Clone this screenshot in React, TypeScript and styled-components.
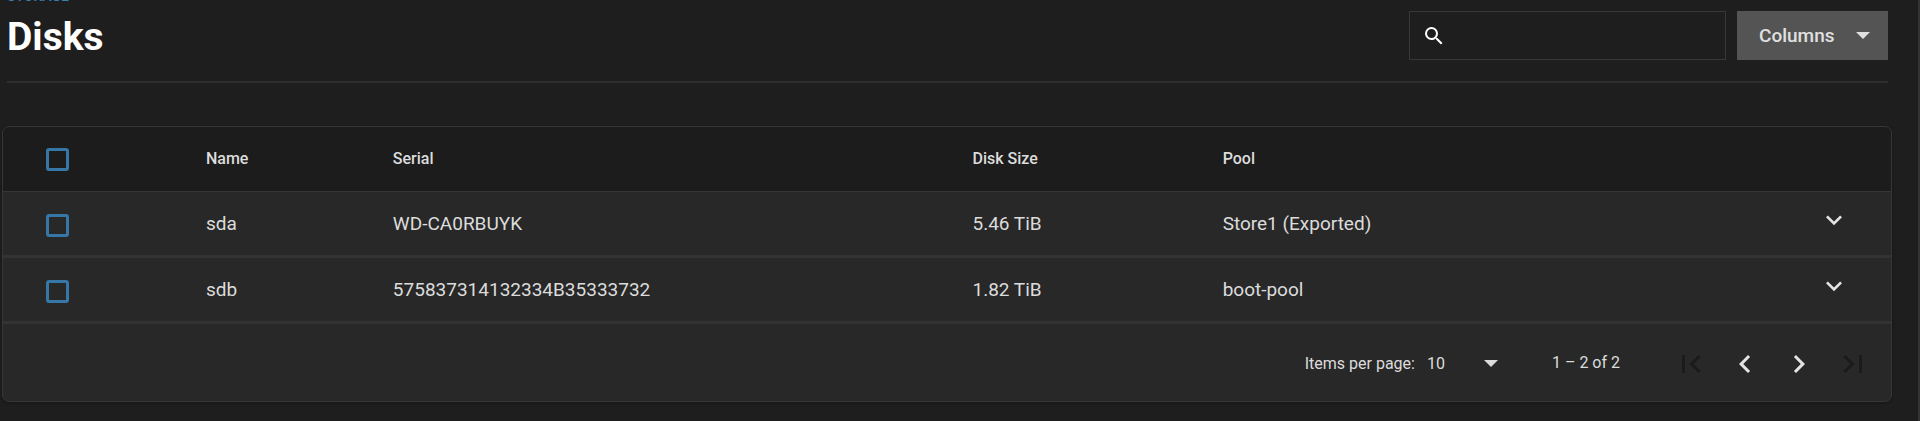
import React, { useState } from 'react';
import styled, { createGlobalStyle } from 'styled-components';

const GlobalStyle = createGlobalStyle`
  *, *::before, *::after { box-sizing: border-box; }
  html { background: #1e1e1e; overflow: hidden; }
  body {
    margin: 0;
    background: #1e1e1e;
    color: #dcdcdc;
    font-family: Roboto, "Liberation Sans", sans-serif;
    font-size: 19px;
  }
  button, input, select { font: inherit; color: inherit; }
`;

const Page = styled.main`
  min-height: 100vh;
  padding: 0 26px 16px 2px;
  border-right: 2px solid #333333;
`;

const PageHeader = styled.header`
  display: flex;
  justify-content: space-between;
  align-items: flex-start;
  margin: 0 4px 0 5px;
  height: 83px;
  border-bottom: 2px solid #2e2e2e;
`;

const Heading = styled.div`
  display: flex;
  flex-direction: column;
  margin-top: -12px;
`;

const Breadcrumb = styled.a`
  color: #3a80b0;
  font-size: 14px;
  line-height: 16px;
  font-weight: 500;
  text-decoration: none;
  text-transform: uppercase;
`;

const Title = styled.h1`
  margin: 10px 0 0;
  color: #ffffff;
  font-size: 39px;
  line-height: 46px;
  font-weight: 700;
`;

const Toolbar = styled.div`
  display: flex;
  gap: 11px;
  padding-top: 11px;
`;

const SearchBox = styled.label`
  display: flex;
  align-items: center;
  gap: 8px;
  width: 317px;
  height: 49px;
  padding: 0 12px;
  border: 1px solid #383838;
  color: #ffffff;
`;

const SearchInput = styled.input`
  flex: 1;
  min-width: 0;
  border: 0;
  outline: 0;
  background: transparent;
`;

const ColumnsButton = styled.button`
  display: flex;
  align-items: center;
  justify-content: space-between;
  width: 151px;
  height: 49px;
  padding: 0 18px 0 22px;
  border: 0;
  background: #545454;
  color: #e0e0e0;
  font-weight: 500;
  cursor: pointer;
`;

const Card = styled.section`
  margin-top: 43px;
  border: 1px solid #363636;
  border-radius: 7px;
  background: #282828;
  overflow: hidden;
  box-shadow: 0 1px 3px rgba(0, 0, 0, 0.3);
`;

const Table = styled.table`
  width: 100%;
  table-layout: fixed;
  border-collapse: separate;
  border-spacing: 0;
`;

const Column = styled.col<{ $width?: string }>`
  width: ${({ $width }) => $width ?? 'auto'};
`;

const HeadCell = styled.th`
  height: 65px;
  padding: 0 0 2px;
  border-bottom: 1px solid #363636;
  background: #1c1c1c;
  font-size: 16px;
  font-weight: 500;
  text-align: left;

  &:first-child { padding: 0 0 0 43px; }
`;

const Cell = styled.td`
  height: 66px;
  padding: 0;
  border-bottom: 3px solid #333333;
  text-align: left;

  &:first-child { padding: 3px 0 0 43px; }
  &:last-child { padding: 0 41px 7px 0; text-align: right; }
`;

const Checkbox = styled.input`
  appearance: none;
  display: block;
  width: 23px;
  height: 23px;
  margin: 0;
  border: 3px solid #3577a6;
  border-radius: 3px;
  cursor: pointer;

  &:checked { background: #3577a6; }
`;

const IconButton = styled.button<{ $width: number }>`
  display: inline-flex;
  align-items: center;
  justify-content: center;
  width: ${({ $width }) => $width}px;
  height: 36px;
  padding: 0;
  border: 0;
  background: transparent;
  color: #e4e4e4;
  vertical-align: middle;
  cursor: pointer;

  &:disabled { color: #1b1b1b; cursor: default; }
`;

const Paginator = styled.footer`
  display: flex;
  align-items: center;
  justify-content: flex-end;
  height: 77px;
  padding: 2px 11px 0 0;
  font-size: 16px;
`;

const PageSize = styled.label`
  display: flex;
  align-items: center;
  gap: 12px;
`;

const SelectWrap = styled.span`
  display: grid;
  width: 71px;
  align-items: center;
  justify-items: end;

  > * { grid-area: 1 / 1; }
  > svg { pointer-events: none; }
`;

const Select = styled.select`
  appearance: none;
  width: 100%;
  padding: 0;
  border: 0;
  outline: 0;
  background: transparent;

  option { background: #282828; }
`;

const Range = styled.span`
  margin: 0 44px 0 54px;
  padding-bottom: 3px;
`;

const paths = {
  search:
    'M15.5 14h-.79l-.28-.27A6.47 6.47 0 0 0 16 9.5 6.5 6.5 0 1 0 9.5 16c1.61 0 3.09-.59 4.23-1.57l.27.28v.79l5 4.99L20.49 19l-4.99-5zm-6 0C7.01 14 5 11.99 5 9.5S7.01 5 9.5 5 14 7.01 14 9.5 11.99 14 9.5 14z',
  down: 'M7.41 8.58 12 13.17l4.59-4.59L18 10l-6 6-6-6z',
  first: 'M18.41 16.59 13.82 12l4.59-4.59L17 6l-6 6 6 6zM6 6h2v12H6z',
  prev: 'M15.41 7.41 14 6l-6 6 6 6 1.41-1.41L10.83 12z',
  next: 'M10 6 8.59 7.41 13.17 12l-4.58 4.59L10 18l6-6z',
  last: 'M5.59 7.41 10.18 12l-4.59 4.59L7 18l6-6-6-6zM16 6h2v12h-2z',
};

function Icon({ name, size }: { name: keyof typeof paths; size: number }) {
  return (
    <svg width={size} height={size} viewBox="0 0 24 24" fill="currentColor" aria-hidden="true">
      <path d={paths[name]} />
    </svg>
  );
}

function Caret() {
  return (
    <svg width="14" height="7" viewBox="0 0 14 7" fill="currentColor" aria-hidden="true">
      <path d="M0 0h14L7 7z" />
    </svg>
  );
}

const disks = [
  { name: 'sda', serial: 'WD-CA0RBUYK', size: '5.46 TiB', pool: 'Store1 (Exported)' },
  { name: 'sdb', serial: '575837314132334B35333732', size: '1.82 TiB', pool: 'boot-pool' },
];

export default function App() {
  const [selected, setSelected] = useState<string[]>([]);
  const toggle = (name: string) =>
    setSelected((s) => (s.includes(name) ? s.filter((n) => n !== name) : [...s, name]));
  const all = selected.length === disks.length;

  return (
    <>
      <GlobalStyle />
      <Page>
        <PageHeader>
          <Heading>
            <Breadcrumb href="#storage">Storage</Breadcrumb>
            <Title>Disks</Title>
          </Heading>
          <Toolbar>
            <SearchBox>
              <Icon name="search" size={24} />
              <SearchInput type="text" aria-label="Search disks" />
            </SearchBox>
            <ColumnsButton type="button">
              Columns
              <Caret />
            </ColumnsButton>
          </Toolbar>
        </PageHeader>

        <Card>
          <Table>
            <colgroup>
              <Column $width="10.75%" />
              <Column $width="9.9%" />
              <Column $width="30.7%" />
              <Column $width="13.25%" />
              <Column />
              <Column $width="8%" />
            </colgroup>
            <thead>
              <tr>
                <HeadCell>
                  <Checkbox
                    type="checkbox"
                    aria-label="Select all disks"
                    checked={all}
                    onChange={() => setSelected(all ? [] : disks.map((d) => d.name))}
                  />
                </HeadCell>
                <HeadCell>Name</HeadCell>
                <HeadCell>Serial</HeadCell>
                <HeadCell>Disk Size</HeadCell>
                <HeadCell>Pool</HeadCell>
                <HeadCell />
              </tr>
            </thead>
            <tbody>
              {disks.map((disk) => (
                <tr key={disk.name}>
                  <Cell>
                    <Checkbox
                      type="checkbox"
                      aria-label={`Select ${disk.name}`}
                      checked={selected.includes(disk.name)}
                      onChange={() => toggle(disk.name)}
                    />
                  </Cell>
                  <Cell>{disk.name}</Cell>
                  <Cell>{disk.serial}</Cell>
                  <Cell>{disk.size}</Cell>
                  <Cell>{disk.pool}</Cell>
                  <Cell>
                    <IconButton type="button" $width={32} aria-label={`Expand ${disk.name}`}>
                      <Icon name="down" size={32} />
                    </IconButton>
                  </Cell>
                </tr>
              ))}
            </tbody>
          </Table>
          <Paginator>
            <PageSize>
              Items per page:
              <SelectWrap>
                <Select defaultValue="10">
                  <option>10</option>
                  <option>20</option>
                  <option>50</option>
                  <option>100</option>
                </Select>
                <Caret />
              </SelectWrap>
            </PageSize>
            <Range>1 – 2 of 2</Range>
            <IconButton type="button" $width={54} aria-label="First page" disabled>
              <Icon name="first" size={36} />
            </IconButton>
            <IconButton type="button" $width={54} aria-label="Previous page">
              <Icon name="prev" size={36} />
            </IconButton>
            <IconButton type="button" $width={54} aria-label="Next page">
              <Icon name="next" size={36} />
            </IconButton>
            <IconButton type="button" $width={54} aria-label="Last page" disabled>
              <Icon name="last" size={36} />
            </IconButton>
          </Paginator>
        </Card>
      </Page>
    </>
  );
}
